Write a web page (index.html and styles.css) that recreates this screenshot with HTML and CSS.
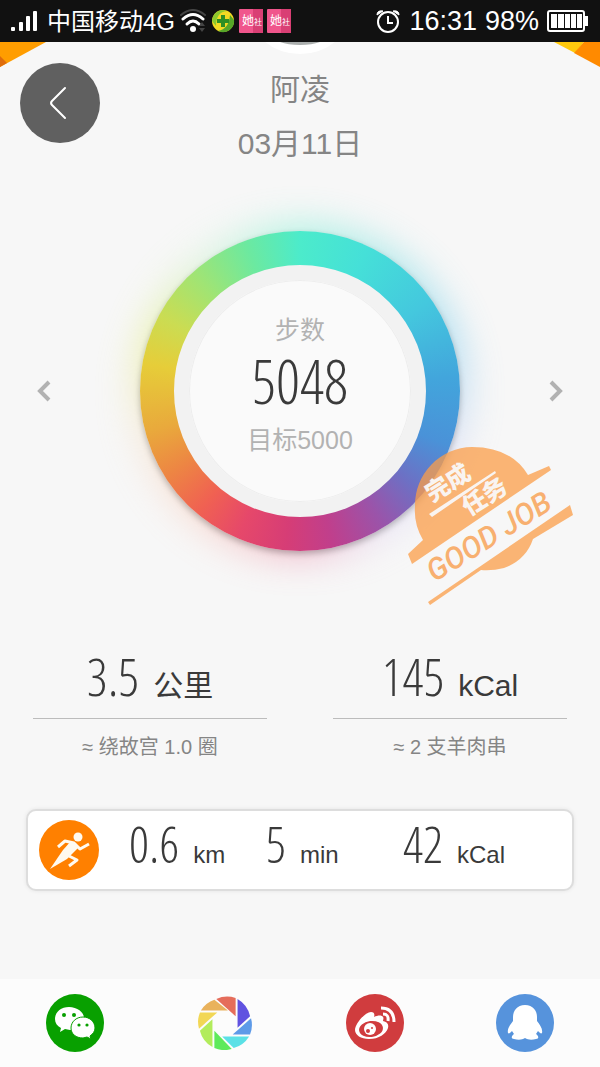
FILE: index.html
```html
<!DOCTYPE html>
<html lang="zh-CN">
<head>
    <meta charset="UTF-8">
    <meta name="viewport" content="width=device-width, initial-scale=1">
    <title>03月11日</title>
    <link rel="stylesheet" href="styles.css">
</head>
<body>
    <div class="status-bar">
        <svg class="signal" width="28" height="22" viewBox="0 0 28 22" fill="#fff">
            <rect x="0" y="17" width="4" height="4" rx="1"/>
            <rect x="8" y="12" width="4" height="9" rx="1"/>
            <rect x="15" y="6" width="4" height="15" rx="1"/>
            <rect x="22" y="1" width="4" height="20" rx="1"/>
        </svg>
        <span class="carrier">中国移动4G</span>
        <svg width="28" height="24" viewBox="0 0 28 24" fill="none" stroke-linecap="round">
            <path d="M2 6 Q14 -4 26 6" stroke="#444" stroke-width="2"/>
            <path d="M4 10 Q14 1 24 10" stroke="#fff" stroke-width="3"/>
            <path d="M8 15 Q14 9 20 15" stroke="#fff" stroke-width="3"/>
            <circle cx="14" cy="20" r="3" fill="#fff"/>
            <path d="M20 17 l3 -4 3 4z M20 19 l3 4 3 -4z" fill="#444"/>
        </svg>
        <svg width="24" height="24" viewBox="0 0 24 24">
            <circle cx="12" cy="12" r="11" fill="#f3da23"/>
            <path d="M1 12 A11 11 0 0 1 16 2 Q5 3 5 17z" fill="#8cc92e"/>
            <path d="M23 11 A11 11 0 0 1 7 22 Q18 20 19 6z" fill="#56a629"/>
            <path d="M10 6h4v4h4v4h-4v4h-4v-4H6v-4h4z" fill="#2f8f24"/>
        </svg>
        <svg class="app" width="24" height="24" viewBox="0 0 24 24">
            <rect width="24" height="24" rx="1" fill="#f0568c"/>
            <rect x="14" width="10" height="24" fill="#d93f74"/>
            <text x="3" y="16" font-size="12">她</text>
            <text x="15" y="16" font-size="8">社</text>
        </svg>
        <svg class="app" width="24" height="24" viewBox="0 0 24 24">
            <rect width="24" height="24" rx="1" fill="#f0568c"/>
            <rect x="14" width="10" height="24" fill="#d93f74"/>
            <text x="3" y="16" font-size="12">她</text>
            <text x="15" y="16" font-size="8">社</text>
        </svg>
        <div class="status-right">
            <svg width="26" height="26" viewBox="0 0 26 26" fill="none" stroke="#fff" stroke-width="2">
                <circle cx="13" cy="14" r="10"/>
                <path d="M13 8v7h5"/>
                <path d="M2 7 Q2 2 8 3z M24 7 Q24 2 18 3z" fill="#fff" stroke-width="1"/>
            </svg>
            <span>16:31</span>
            <span>98%</span>
            <svg width="42" height="22" viewBox="0 0 42 22">
                <rect x="1" y="1" width="36" height="20" rx="2" fill="none" stroke="#fff" stroke-width="2"/>
                <path d="M38 6h3v10h-3z M4 4h6v14H4z M11 4h6v14h-6z M18 4h5v14h-5z M24 4h5v14h-5z M30 4h5v14h-5z" fill="#fff"/>
            </svg>
        </div>
    </div>

    <header class="top">
        <svg class="corner left" width="46" height="26" viewBox="0 0 46 26">
            <path d="M0 0h46L0 25z" fill="#ff9d00"/>
            <path d="M0 14l7 7-7 4z" fill="#df6c0b"/>
        </svg>
        <svg class="corner right" width="46" height="26" viewBox="0 0 46 26">
            <path d="M0 0h30l-9 11z" fill="#ffc90d"/>
            <path d="M30 0h16v25L20 11z" fill="#ff8a00"/>
        </svg>
        <svg class="avatar" width="80" height="12" viewBox="0 0 80 12">
            <path d="M5 0Q20 12 40 12T75 0z" fill="#fff"/>
            <path d="M20 0h40q-8 3-20 3T20 0z" fill="#aaaead"/>
        </svg>
        <button class="back" aria-label="返回">
            <svg width="20" height="36" viewBox="0 0 20 36" fill="none" stroke="#fff" stroke-width="2" stroke-linecap="round">
                <path d="M17 3L4 16Q2 18 4 20L17 33"/>
            </svg>
        </button>
        <h1>阿凌</h1>
        <p>03月11日</p>
    </header>

    <section class="steps">
        <button class="arrow" aria-label="前一天">
            <svg width="16" height="24" viewBox="0 0 16 24" fill="none" stroke="#b2b2b2" stroke-width="4"><path d="M13 3L4 12l9 9"/></svg>
        </button>
        <div class="wheel">
            <div class="ring">
                <div class="dial">
                    <span class="label">步数</span>
                    <strong class="num">5048</strong>
                    <span class="label">目标5000</span>
                </div>
            </div>
            <svg class="stamp" width="200" height="190" viewBox="0 0 200 190">
                <g fill="#fb9d48" fill-opacity="0.75">
                    <path d="M33 110A57 57 0 0 1 25 76A58 58 0 0 1 82 17Q121 17 138 45L159 36 161 40 22 134 18 124z"/>
                    <path d="M38 172L180 75 183 85 143 109Q136 130 114 138 102 141 91 140L40 175z"/>
                </g>
                <path d="M39 84L105 41 106 43 42 87z" fill="#f9f4f1"/>
                <g transform="rotate(-32)">
                    <text class="stamp-cn" x="-3" y="84">完成</text>
                    <text class="stamp-cn" x="21" y="115">任务</text>
                    <text class="stamp-en" x="-43" y="153">GOOD JOB</text>
                </g>
            </svg>
        </div>
        <button class="arrow" aria-label="后一天">
            <svg width="16" height="24" viewBox="0 0 16 24" fill="none" stroke="#b2b2b2" stroke-width="4"><path d="M3 3l9 9-9 9"/></svg>
        </button>
    </section>

    <section class="stats">
        <div class="stat">
            <div class="value"><strong class="num">3.5</strong><span>公里</span></div>
            <p>≈ 绕故宫 1.0 圈</p>
        </div>
        <div class="stat">
            <div class="value"><strong class="num">145</strong><span>kCal</span></div>
            <p>≈ 2 支羊肉串</p>
        </div>
    </section>

    <section class="run">
        <svg width="60" height="60" viewBox="0 0 60 60">
            <circle cx="30" cy="30" r="30" fill="#ff8000"/>
            <circle cx="39" cy="17" r="4.500" fill="#fffaf0"/>
            <path d="M11 49L24 30l8-9 8 6-6 6-6 6z" fill="#fffaf0"/>
            <path d="M19 27l7-6 9 2 6 6 9-5M30 36l8 4-8 6" fill="none" stroke="#fffaf0" stroke-width="3" stroke-linejoin="round"/>
        </svg>
        <div class="item"><strong class="num">0.6</strong><span>km</span></div>
        <div class="item"><strong class="num">5</strong><span>min</span></div>
        <div class="item"><strong class="num">42</strong><span>kCal</span></div>
    </section>

    <footer class="share">
        <button aria-label="微信">
            <svg width="58" height="58" viewBox="0 0 58 58">
                <circle cx="29" cy="29" r="29" fill="#08a000"/>
                <path d="M23 13c-8 0-14 5-14 12 0 4 2 7 6 9l-1 4 5-3 5 1c8 0 14-5 14-12 0-6-7-11-15-11z" fill="#fff"/>
                <path d="M37 23c-7 0-12 5-12 11s5 10 12 10l4-1 4 2-1-3c3-2 5-5 5-8 0-6-5-11-12-11z" fill="#fff" stroke="#08a000" stroke-width="1"/>
                <g fill="#08a000"><circle cx="18" cy="21" r="2"/><circle cx="28" cy="21" r="2"/><circle cx="33" cy="31" r="1.600"/><circle cx="41" cy="31" r="1.600"/></g>
            </svg>
        </button>
        <button aria-label="朋友圈">
            <svg width="54" height="54" viewBox="0 0 56 56">
                <path d="M19 3A27 27 0 0 1 39 2V21z" fill="#e56d5b"/>
                <path d="M41 3A27 27 0 0 1 54 21L41 33z" fill="#6052e0"/>
                <path d="M55 23A27 27 0 0 1 54 40H36z" fill="#5d9ae8"/>
                <path d="M53 42A27 27 0 0 1 37 54L25 42z" fill="#5be1e6"/>
                <path d="M35 55A27 27 0 0 1 17 54V36z" fill="#5eea5b"/>
                <path d="M15 53A27 27 0 0 1 2 36L15 24z" fill="#b2ec5c"/>
                <path d="M1 34A27 27 0 0 1 2 17H20z" fill="#f2d755"/>
                <path d="M3 15A27 27 0 0 1 17 4L31 15z" fill="#e9b25c"/>
            </svg>
        </button>
        <button aria-label="微博">
            <svg width="58" height="58" viewBox="0 0 58 58">
                <circle cx="29" cy="29" r="29" fill="#d03c3e"/>
                <path d="M25 18c3 0 4 2 3 5 4-2 8-2 9 0 1 1 0 3 0 4 4 1 6 3 5 7-2 6-9 11-19 11-8 0-14-4-14-9 0-6 10-18 16-18z" fill="#fff"/>
                <ellipse cx="25" cy="35" rx="12" ry="8" fill="#d03c3e" transform="rotate(-7 25 35)"/>
                <circle cx="24" cy="35" r="6" fill="#fff"/>
                <circle cx="22" cy="37" r="2" fill="#d03c3e"/><circle cx="26" cy="34" r="1" fill="#d03c3e"/>
                <path d="M35 14q13 0 13 14M37 20q6 0 5 7" fill="none" stroke="#fff" stroke-width="3"/>
            </svg>
        </button>
        <button aria-label="QQ">
            <svg width="58" height="58" viewBox="0 0 58 58">
                <circle cx="29" cy="29" r="29" fill="#5693dc"/>
                <path d="M29 11c-8 0-12 6-12 12v4c-3 4-6 8-5 12 1 1 2 0 4-2l2 3c-3 2-3 5 0 5 4 1 8 1 11-1 3 2 7 2 11 1 3 0 3-3 0-5l2-3c2 2 3 3 4 2 1-4-2-8-5-12v-4c0-6-4-12-12-12z" fill="#fff"/>
            </svg>
        </button>
    </footer>
</body>
</html>
```
FILE: styles.css
```css
* {
    box-sizing: border-box;
}
body {
    margin: 0;
    min-height: 100vh;
    display: flex;
    flex-direction: column;
    background-color: #f7f7f7;
    color: #3a3a3a;
    font-family: "Liberation Sans", "Noto Sans CJK SC", sans-serif;
}
h1, p {
    margin: 0;
    font-weight: normal;
}
button {
    padding: 0;
    border: none;
    background: none;
    cursor: pointer;
}
svg {
    display: block;
    flex: none;
}
.num {
    font-family: "Open Sans Condensed Light", "Roboto Condensed", "Liberation Sans Narrow", "Liberation Sans", sans-serif;
    font-weight: 300;
}

/* status bar */
.status-bar {
    display: flex;
    align-items: center;
    gap: 4px;
    height: 42px;
    padding: 0 11px;
    background-color: #111;
    color: #fff;
    white-space: nowrap;
}
.carrier {
    font-size: 24px;
    margin-left: 4px;
    padding-bottom: 4px;
}
.app text {
    fill: #fff;
}
.status-right {
    display: flex;
    align-items: center;
    gap: 8px;
    margin-left: auto;
    font-size: 27px;
}

/* name and date */
.top {
    position: relative;
    padding-top: 21px;
    text-align: center;
    color: #858585;
}
.top h1, .top p {
    font-size: 30px;
    line-height: 54px;
}
.corner, .avatar {
    position: absolute;
    top: 0;
}
.left {
    left: 0;
}
.right {
    right: 0;
}
.avatar {
    left: calc(50% - 40px);
}
.back {
    position: absolute;
    left: 20px;
    top: 21px;
    width: 80px;
    height: 80px;
    display: flex;
    align-items: center;
    justify-content: center;
    border-radius: 50%;
    background-color: #606060;
}
.back svg {
    margin-right: 4px;
}

/* step wheel */
.steps {
    display: flex;
    align-items: center;
    justify-content: space-between;
    padding: 0 35px;
    margin-top: 60px;
}
.wheel {
    position: relative;
    width: 320px;
    height: 320px;
}
.wheel::before {
    content: "";
    position: absolute;
    inset: -8px;
    border-radius: 50%;
    background: conic-gradient(#4eecc8, #47b8e8 70deg, #b9c2f2 110deg, #d8c8f0 150deg, #e8648c 180deg, #f9b49a 220deg, #f4d8b0 255deg, #dbe94d 290deg, #b8efc0 325deg, #4eecc8);
    filter: blur(18px);
    opacity: 0.4;
}
.ring {
    position: relative;
    height: 100%;
    padding: 34px;
    border-radius: 50%;
    background: conic-gradient(#4cebcb, #45e0d8 25deg, #44c8de 55deg, #42a5dc 85deg, #4a92d8 110deg, #6d70c4 130deg, #9a54aa 148deg, #c03f8c 168deg, #d63d76 185deg, #e6486a 203deg, #f06152 220deg, #ed8643 238deg, #e9a93c 255deg, #e6cd39 280deg, #cbdc52 298deg, #a0e474 318deg, #6ce9a0 340deg, #4cebcb);
    box-shadow: 0 3px 6px rgba(0, 0, 0, 0.25);
}
.dial {
    height: 100%;
    display: flex;
    flex-direction: column;
    align-items: center;
    justify-content: center;
    padding-bottom: 12px;
    border: 15px solid #f2f2f2;
    border-radius: 50%;
    background-color: #fafafa;
    box-shadow: inset 0 0 0 1px #ededed;
}
.dial .label {
    font-size: 25px;
    line-height: 36px;
    color: #b2b2b2;
}
.dial .num {
    margin-bottom: 8px;
    font-size: 60px;
    line-height: 66px;
}
.stamp {
    position: absolute;
    left: 250px;
    top: 199px;
}
.stamp-cn {
    font-size: 24px;
    font-weight: 900;
    fill: #f9f4f1;
}
.stamp-en {
    font-family: Roboto, sans-serif;
    font-size: 30px;
    font-style: italic;
    font-weight: 500;
    fill: #f8b070;
}
.arrow svg {
    margin: 0 1px;
}

/* distance and calories */
.stats {
    display: grid;
    grid-template-columns: 1fr 1fr;
    gap: 66px;
    padding: 0 33px;
    margin-top: 96px;
    text-align: center;
}
.value {
    height: 72px;
    border-bottom: 1px solid #bcbcbc;
    font-size: 30px;
    line-height: 58px;
}
.value .num {
    margin-right: 14px;
    font-size: 52px;
}
.stat p {
    font-size: 20px;
    line-height: 56px;
    color: #858585;
}

/* running summary */
.run {
    display: flex;
    align-items: center;
    margin: 34px 26px 24px;
    padding: 9px 62px 9px 11px;
    border: 2px solid #ddd;
    border-radius: 10px;
    background-color: #fff;
    box-shadow: 0 0 4px rgba(0, 0, 0, 0.08);
}
.item {
    flex: 1;
    display: flex;
    align-items: baseline;
    padding: 0 0 12px 30px;
    font-size: 24px;
    line-height: 1;
    white-space: nowrap;
}
.item .num {
    margin-right: 14px;
    font-size: 50px;
    line-height: 48px;
}

/* share buttons */
.share {
    display: grid;
    grid-template-columns: repeat(4, 1fr);
    justify-items: center;
    margin-top: auto;
    padding: 15px 0;
    background-color: #fcfcfc;
}
.share button {
    height: 58px;
    display: flex;
    align-items: center;
}
```
